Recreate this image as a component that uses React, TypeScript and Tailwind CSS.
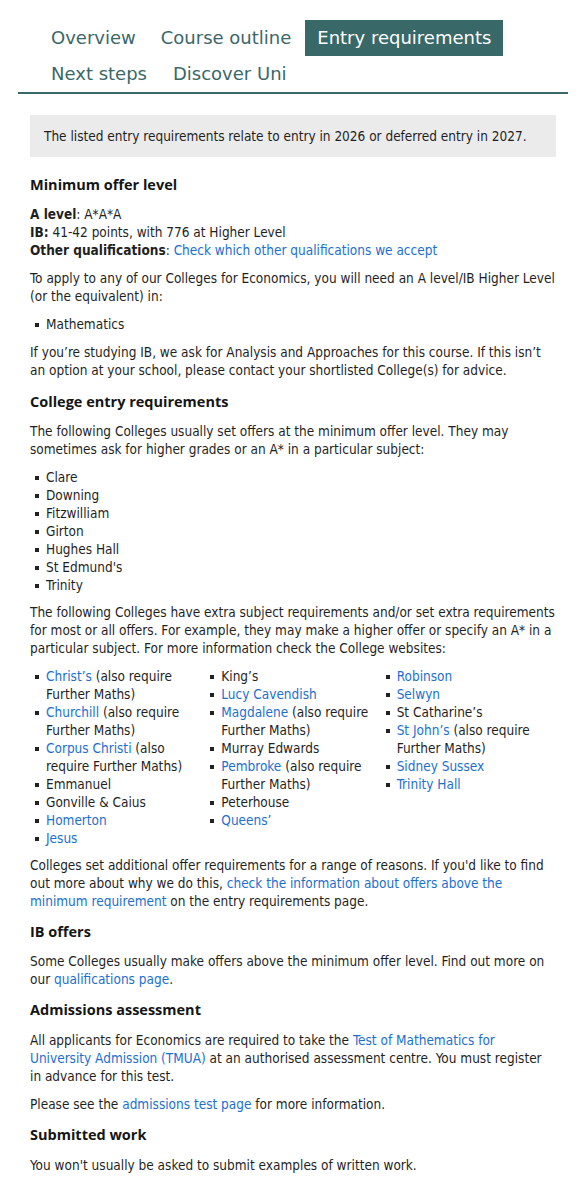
import React from "react";

const A = ({ children }: { children: React.ReactNode }) => (
  <a href="#" className="text-[#1d6fcf] no-underline">
    {children}
  </a>
);

const Li = ({ children }: { children: React.ReactNode }) => (
  <li className="flex">
    <span className="w-[16px] shrink-0 flex items-start pt-[8px] pl-[5px]">
      <span className="block w-[4px] h-[4px] bg-[#222]" />
    </span>
    <span className="flex-1 pr-[8px]">{children}</span>
  </li>
);

const H = ({ children, top }: { children: React.ReactNode; top: 11 | 12 | 17 }) => (
  <h2
    className={
      "font-['Open_Sans','DejaVu_Sans',sans-serif] text-[14.5px] leading-[22px] font-bold text-[#151515] " +
      (top === 17 ? "mt-[17px]" : top === 12 ? "mt-[12px]" : "mt-[11px]")
    }
  >
    {children}
  </h2>
);

const P = ({ children, gap = 10 }: { children: React.ReactNode; gap?: 9 | 10 }) => (
  <p className={gap === 9 ? "mt-[9px]" : "mt-[10px]"}>{children}</p>
);

export default function App() {
  return (
    <div className="bg-white min-h-[1183px] px-[18px] pt-[20px] pb-[10px]">
      <nav className="font-['DejaVu_Sans',sans-serif] border-b-2 border-[#386868]">
        <ul className="flex flex-wrap pl-[21px] text-[18px] leading-[36px] text-[#3b6767]">
          <li className="px-[12px] mr-[1px]">Overview</li>
          <li className="px-[12px] mr-[2px]">Course outline</li>
          <li className="px-[12px] bg-[#386868] text-white">Entry requirements</li>
          <li className="px-[12px] mr-[2px]">Next steps</li>
          <li className="px-[12px]">Discover Uni</li>
        </ul>
      </nav>
      <div className="font-['DejaVu_Sans_Condensed','DejaVu_Sans',sans-serif] px-[12px] text-[13.5px] leading-[18px] text-[#1f1f1f]">
        <div className="mt-[21px] bg-[#ebebeb] px-[14px] py-[12px]">
          The listed entry requirements relate to entry in 2026 or deferred entry in 2027.
        </div>

        <H top={17}>Minimum offer level</H>
        <P gap={9}>
          <b>A level</b>: A*A*A
          <br />
          <b>IB:</b> 41-42 points, with 776 at Higher Level
          <br />
          <b>Other qualifications</b>: <A>Check which other qualifications we accept</A>
        </P>
        <P>
          To apply to any of our Colleges for Economics, you will need an A level/IB Higher Level (or
          the equivalent) in:
        </P>
        <ul className="mt-[10px]">
          <Li>Mathematics</Li>
        </ul>
        <P>
          If you’re studying IB, we ask for Analysis and Approaches for this course. If this isn’t an
          option at your school, please contact your shortlisted College(s) for advice.
        </P>

        <H top={12}>College entry requirements</H>
        <P gap={9}>
          The following Colleges usually set offers at the minimum offer level. They may sometimes ask
          for higher grades or an A* in a particular subject:
        </P>
        <ul className="mt-[10px]">
          <Li>Clare</Li>
          <Li>Downing</Li>
          <Li>Fitzwilliam</Li>
          <Li>Girton</Li>
          <Li>Hughes Hall</Li>
          <Li>St Edmund's</Li>
          <Li>Trinity</Li>
        </ul>
        <P gap={9}>
          The following Colleges have extra subject requirements and/or set extra requirements for
          most or all offers. For example, they may make a higher offer or specify an A* in a
          particular subject. For more information check the College websites:
        </P>
        <div className="mt-[10px] grid grid-cols-3">
          <ul>
            <Li>
              <A>Christ’s</A> (also require Further Maths)
            </Li>
            <Li>
              <A>Churchill</A> (also require Further Maths)
            </Li>
            <Li>
              <A>Corpus Christi</A> (also require Further Maths)
            </Li>
            <Li>Emmanuel</Li>
            <Li>Gonville &amp; Caius</Li>
            <Li>
              <A>Homerton</A>
            </Li>
            <Li>
              <A>Jesus</A>
            </Li>
          </ul>
          <ul>
            <Li>King’s</Li>
            <Li>
              <A>Lucy Cavendish</A>
            </Li>
            <Li>
              <A>Magdalene</A> (also require Further Maths)
            </Li>
            <Li>Murray Edwards</Li>
            <Li>
              <A>Pembroke</A> (also require Further Maths)
            </Li>
            <Li>Peterhouse</Li>
            <Li>
              <A>Queens’</A>
            </Li>
          </ul>
          <ul>
            <Li>
              <A>Robinson</A>
            </Li>
            <Li>
              <A>Selwyn</A>
            </Li>
            <Li>St Catharine’s</Li>
            <Li>
              <A>St John’s</A> (also require Further Maths)
            </Li>
            <Li>
              <A>Sidney Sussex</A>
            </Li>
            <Li>
              <A>Trinity Hall</A>
            </Li>
          </ul>
        </div>
        <P gap={9}>
          Colleges set additional offer requirements for a range of reasons. If you'd like to find out
          more about why we do this,{" "}
          <A>check the information about offers above the minimum requirement</A> on the entry
          requirements page.
        </P>

        <H top={11}>IB offers</H>
        <P gap={9}>
          Some Colleges usually make offers above the minimum offer level. Find out more on our{" "}
          <A>qualifications page</A>.
        </P>

        <H top={11}>Admissions assessment</H>
        <P gap={10}>
          All applicants for Economics are required to take the{" "}
          <A>Test of Mathematics for University Admission (TMUA)</A> at an authorised assessment
          centre. You must register in advance for this test.
        </P>
        <P>
          Please see the <A>admissions test page</A> for more information.
        </P>

        <H top={11}>Submitted work</H>
        <P gap={10}>You won't usually be asked to submit examples of written work.</P>
      </div>
    </div>
  );
}
